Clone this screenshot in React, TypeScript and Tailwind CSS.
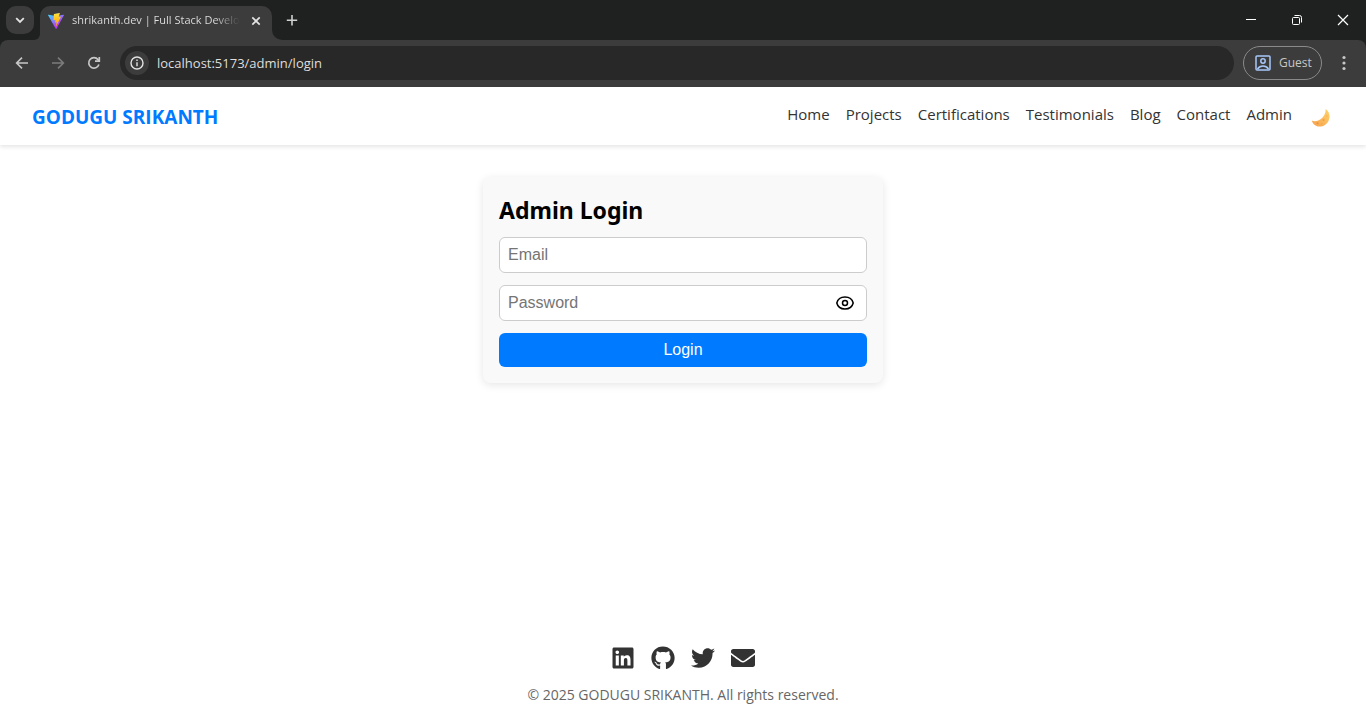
import React from "react";
import { FaLinkedin, FaGithub, FaTwitter, FaEnvelope } from "react-icons/fa";

const navLinks = ["Home", "Projects", "Certifications", "Testimonials", "Blog", "Contact", "Admin"];

const socials = [
  { label: "LinkedIn", Icon: FaLinkedin },
  { label: "GitHub", Icon: FaGithub },
  { label: "Twitter", Icon: FaTwitter },
  { label: "Email", Icon: FaEnvelope },
];

function ViteLogo() {
  return (
    <svg viewBox="0 0 256 257" className="h-4 w-4 shrink-0" aria-hidden="true">
      <defs>
        <linearGradient id="viteBody" x1="-.8%" x2="57.6%" y1="7.7%" y2="78.4%">
          <stop offset="0%" stopColor="#41D1FF" />
          <stop offset="100%" stopColor="#BD34FE" />
        </linearGradient>
        <linearGradient id="viteBolt" x1="43.4%" x2="50.3%" y1="2.2%" y2="89%">
          <stop offset="0%" stopColor="#FFEA83" />
          <stop offset="8.3%" stopColor="#FFDD35" />
          <stop offset="100%" stopColor="#FFA800" />
        </linearGradient>
      </defs>
      <path
        fill="url(#viteBody)"
        d="M255.153 37.938 134.897 252.976c-2.483 4.44-8.862 4.466-11.382.048L.875 37.958c-2.746-4.814 1.371-10.646 6.827-9.67l120.385 21.517a6.537 6.537 0 0 0 2.322-.004l117.867-21.483c5.438-.991 9.574 4.796 6.877 9.62Z"
      />
      <path
        fill="url(#viteBolt)"
        d="M185.432.063 96.44 17.501a3.268 3.268 0 0 0-2.634 3.014l-5.474 92.456a3.268 3.268 0 0 0 3.997 3.378l24.777-5.718c2.318-.535 4.413 1.507 3.936 3.838l-7.361 36.047c-.495 2.426 1.782 4.5 4.151 3.78l15.304-4.649c2.372-.72 4.652 1.36 4.15 3.788l-11.698 56.621c-.732 3.542 3.979 5.473 5.943 2.437l1.313-2.028 72.516-144.72c1.215-2.423-.88-5.186-3.54-4.672l-25.505 4.922c-2.396.462-4.435-1.77-3.759-4.114l16.646-57.705c.677-2.35-1.37-4.583-3.769-4.113Z"
      />
    </svg>
  );
}

function BrowserChrome() {
  return (
    <div className="bg-[#1f2120]">
      <div className="flex h-10 items-start">
        <button aria-label="Search tabs" className="ml-[6px] mt-[6px] flex h-7 w-7 items-center justify-center rounded-[10px] bg-[#3c3c3c] text-[#e3e3e3]">
          <svg viewBox="0 0 12 12" className="h-3 w-3" fill="none" stroke="currentColor" strokeWidth="1.8">
            <path d="M2.2 4.2 6 8l3.8-3.8" />
          </svg>
        </button>
        <div className="h-[6px] w-[6px] self-end bg-[#3c3c3c]">
          <div className="h-full w-full rounded-br-[6px] bg-[#1f2120]" />
        </div>
        <div className="mt-[6px] flex h-[34px] w-[232px] items-center rounded-t-[10px] bg-[#3c3c3c] pb-[5px] pl-2 pr-2">
          <ViteLogo />
          <span className="ml-2 flex-1 whitespace-nowrap bg-gradient-to-r from-[#e3e3e3] from-85% to-[#3c3c3c] bg-clip-text text-[11px] text-transparent">
            shrikanth.dev | Full Stack Develo
          </span>
          <button aria-label="Close tab" className="ml-2 flex h-4 w-4 items-center justify-center text-[#e3e3e3]">
            <svg viewBox="0 0 16 16" className="h-4 w-4" fill="none" stroke="currentColor" strokeWidth="1.7">
              <path d="m4.3 4.3 7.4 7.4m0-7.4-7.4 7.4" />
            </svg>
          </button>
        </div>
        <div className="h-[10px] w-[10px] self-end bg-[#3c3c3c]">
          <div className="h-full w-full rounded-bl-[10px] bg-[#1f2120]" />
        </div>
        <button aria-label="New tab" className="mt-3 flex h-4 w-5 items-center justify-center text-[#d0d0d0]">
          <svg viewBox="0 0 16 16" className="h-4 w-4" fill="none" stroke="currentColor" strokeWidth="1.6">
            <path d="M8 3v10.400M2.800 8.200h10.400" />
          </svg>
        </button>
        <div className="ml-auto flex h-10 text-white">
          <button aria-label="Minimize" className="flex w-[46px] items-center justify-center">
            <svg viewBox="0 0 12 12" className="h-3 w-3" stroke="currentColor">
              <path d="M1 5.500h10" />
            </svg>
          </button>
          <button aria-label="Restore" className="flex w-[46px] items-center justify-center">
            <svg viewBox="0 0 12 12" className="h-3 w-3" fill="none" stroke="currentColor">
              <rect x="1.500" y="3.500" width="7" height="7" rx="1" />
              <path d="M3.500 1.500h5a2 2 0 0 1 2 2v5" />
            </svg>
          </button>
          <button aria-label="Close window" className="flex w-[46px] items-center justify-center">
            <svg viewBox="0 0 12 12" className="h-3 w-3" stroke="currentColor" strokeWidth="1.2">
              <path d="m1 1 10 10M11 1 1 11" />
            </svg>
          </button>
        </div>
      </div>
      <div className="flex h-[47px] items-center rounded-t-lg bg-[#3c3c3c] pb-px text-[#c7c7c7]">
        <button aria-label="Back" className="ml-[14px] h-4 w-4">
          <svg viewBox="0 0 16 16" className="h-4 w-4" fill="none" stroke="currentColor" strokeWidth="1.6">
            <path d="M14 8H3M8 2.600 2.600 8 8 13.400" />
          </svg>
        </button>
        <button aria-label="Forward" className="ml-5 h-4 w-4 text-[#7c7c7c]">
          <svg viewBox="0 0 16 16" className="h-4 w-4" fill="none" stroke="currentColor" strokeWidth="1.6">
            <path d="M2 8h11M8 2.600 13.400 8 8 13.400" />
          </svg>
        </button>
        <button aria-label="Reload" className="ml-5 h-4 w-4">
          <svg viewBox="0 0 16 16" className="h-4 w-4" fill="none" stroke="currentColor" strokeWidth="1.700">
            <path d="M12.900 9.500A5.200 5.200 0 1 1 12 4.600L13.300 6" />
            <path d="M13.300 2v4.200H9" />
          </svg>
        </button>
        <div className="ml-[18px] flex h-[34px] flex-1 items-center rounded-full bg-[#282828] pl-[5px]">
          <button aria-label="Site information" className="flex h-6 w-6 shrink-0 items-center justify-center rounded-full bg-[#3c3c3c] text-[#e3e3e3]">
            <svg viewBox="0 0 14 14" className="h-[14px] w-[14px]" fill="none" stroke="currentColor" strokeWidth="1.400">
              <circle cx="7" cy="7" r="6" />
              <path d="M7 6.200v4M7 3.600v1.500" />
            </svg>
          </button>
          <input
            aria-label="Address"
            defaultValue="localhost:5173/admin/login"
            className="ml-2 min-w-0 flex-1 bg-transparent text-[13px] leading-5 text-[#dedede] outline-none"
          />
        </div>
        <button className="ml-[9px] flex h-[34px] w-[79px] items-center rounded-full border border-[#8a8a8a] pl-[11px] text-[12px] text-[#c7c7c7]">
          <svg viewBox="0 0 16 16" className="mr-2 h-4 w-4 shrink-0 text-[#a8c7fa]" fill="none" stroke="currentColor" strokeWidth="1.500" aria-hidden="true">
            <rect x="1" y="1" width="14" height="14" rx="1" />
            <circle cx="8" cy="6" r="2.200" />
            <path d="M2.500 14c1.400-2 3.300-3 5.500-3s4.100 1 5.500 3" />
          </svg>
          Guest
        </button>
        <button aria-label="Browser menu" className="ml-[14px] mr-[14px] h-4 w-4">
          <svg viewBox="0 0 16 16" className="h-4 w-4" fill="currentColor">
            <circle cx="8" cy="2.500" r="1.600" />
            <circle cx="8" cy="8" r="1.600" />
            <circle cx="8" cy="13.500" r="1.600" />
          </svg>
        </button>
      </div>
    </div>
  );
}

function Moon() {
  return (
    <svg viewBox="0 0 20 20" className="h-5 w-5" aria-hidden="true">
      <defs>
        <linearGradient id="moon" x1="0" x2="1" y1="1" y2="0">
          <stop offset="0" stopColor="#f6a04c" />
          <stop offset="1" stopColor="#ffd46b" />
        </linearGradient>
      </defs>
      <path fill="url(#moon)" d="M14.600 1c3.600 2.300 5.100 7 3.200 11.200-2.100 4.800-7.200 7.500-11.800 6C3.300 17.300 1.400 15.200.7 12.600c2.500 1.100 5.900.8 8.800-1.300C13.100 8.700 14.900 4.900 14.600 1Z" />
      <circle cx="12.600" cy="12" r="1.100" fill="#efa04a" />
      <circle cx="6.500" cy="15.200" r="1" fill="#e98f49" />
      <circle cx="15.900" cy="8" r=".8" fill="#f2b052" />
      <circle cx="11" cy="16" r=".8" fill="#f0ac50" />
    </svg>
  );
}

function Header() {
  return (
    <header className="flex h-[58px] items-center justify-between bg-white px-8 shadow-[0_2px_4px_rgba(0,0,0,0.1)]">
      <div className="pt-px text-[19px] font-bold leading-6 text-[#007bff]">GODUGU SRIKANTH</div>
      <nav className="flex items-center gap-4 text-[15px] leading-6 text-[#333]">
        {navLinks.map((name) => (
          <a key={name} href={"#" + name.toLowerCase()} className="pb-1">
            {name}
          </a>
        ))}
        <button aria-label="Toggle dark mode" className="ml-[3px] mr-[3px] pt-1">
          <Moon />
        </button>
      </nav>
    </header>
  );
}

function LoginCard() {
  const field = "block h-9 w-full rounded-[6px] border border-[#ccc] bg-white px-2 text-[16px] text-black outline-none placeholder:text-[#757575]";
  return (
    <form className="mx-auto mt-8 w-full max-w-[400px] rounded-lg bg-[#f9f9f9] p-4 font-['Liberation_Sans',sans-serif] shadow-[0_2px_8px_rgba(0,0,0,0.1)]">
      <h2 className="mb-[10px] font-['Noto_Sans','Open_Sans',sans-serif] text-[23px] font-bold leading-[34px] text-black">Admin Login</h2>
      <input type="email" aria-label="Email" placeholder="Email" className={field} />
      <div className="relative mt-3">
        <input type="password" aria-label="Password" placeholder="Password" className={field} />
        <button type="button" aria-label="Show password" className="absolute inset-y-0 right-3 flex items-center text-black">
          <svg viewBox="0 0 20 20" className="h-5 w-5" fill="none" stroke="currentColor" strokeWidth="1.500">
            <path d="M1.800 10C2.700 6.300 5.900 4 10 4S17.300 6.300 18.200 10C17.300 13.700 14.100 16 10 16S2.700 13.700 1.800 10Z" />
            <circle cx="10" cy="10" r="2.500" />
          </svg>
        </button>
      </div>
      <button type="button" className="mt-3 block h-[34px] w-full rounded-[6px] bg-[#007bff] text-[16px] text-white">
        Login
      </button>
    </form>
  );
}

export default function App() {
  return (
    <div className="flex min-h-screen flex-col bg-white font-['Open_Sans','Noto_Sans',sans-serif]">
      <BrowserChrome />
      <Header />
      <main className="flex-1">
        <LoginCard />
      </main>
      <footer className="flex flex-col items-center pb-[15px] text-[#333]">
        <div className="flex gap-4">
          {socials.map(({ label, Icon }) => (
            <a key={label} href={"#" + label.toLowerCase()} aria-label={label}>
              <Icon className="h-6 w-6" />
            </a>
          ))}
        </div>
        <p className="mt-[15px] text-[14px] leading-5 text-[#666]">© 2025 GODUGU SRIKANTH. All rights reserved.</p>
      </footer>
    </div>
  );
}
